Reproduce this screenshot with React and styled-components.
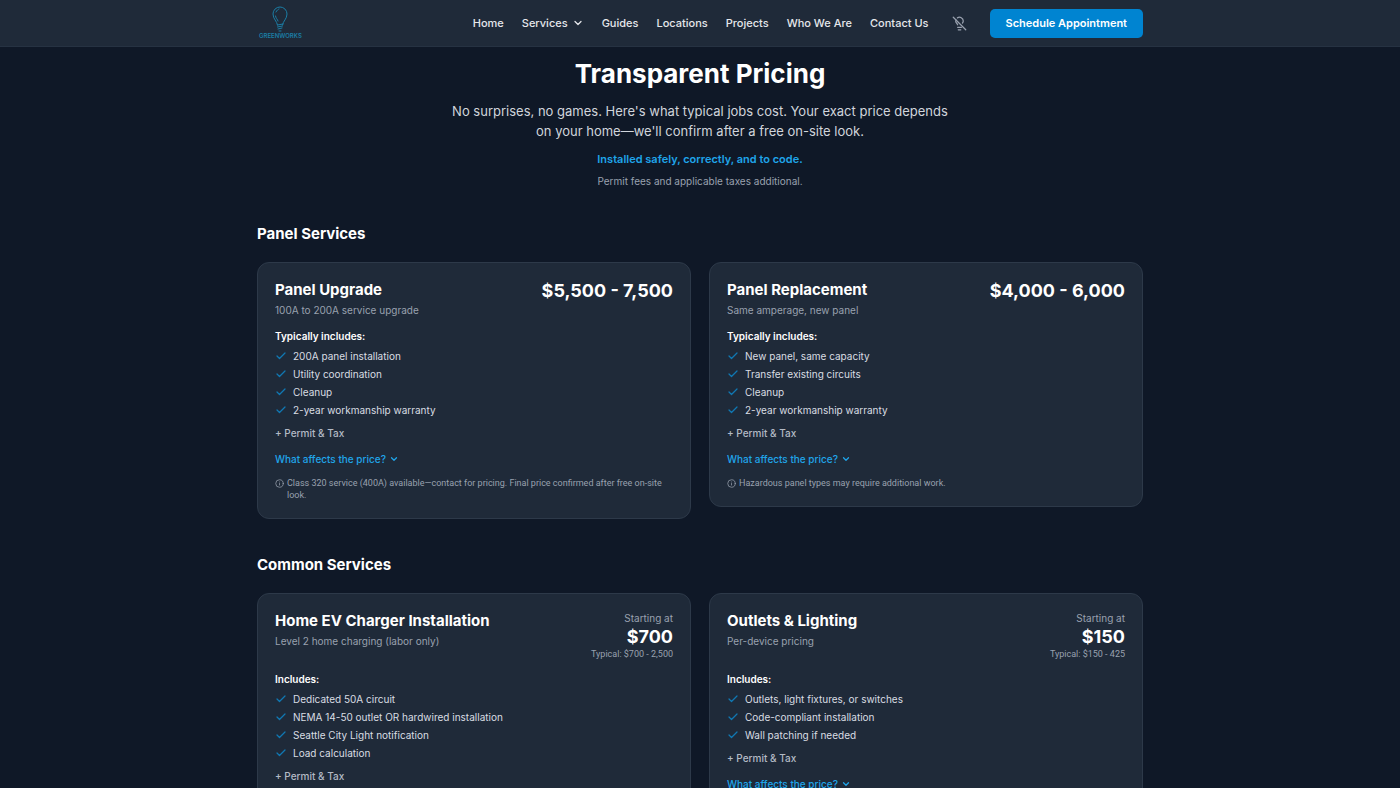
import { Check, ChevronDown, Info, LightbulbOff } from 'lucide-react'
import styled, { createGlobalStyle } from 'styled-components'

const GlobalStyle = createGlobalStyle`
  *, *::before, *::after {
    box-sizing: border-box;
  }
  body {
    margin: 0;
    background: #0f1827;
    color: #ffffff;
    font-family: Inter, 'Liberation Sans', sans-serif;
    font-size: 11px;
    line-height: 16px;
  }
  h1, h2, h3, p, ul {
    margin: 0;
    padding: 0;
  }
  svg {
    flex-shrink: 0;
  }
`

const Page = styled.div`
  height: 100vh;
  overflow: hidden;
`

const Header = styled.header`
  background: #1f2a39;
  border-bottom: 1px solid #263242;
`

const Container = styled.div`
  max-width: 918px;
  margin: 0 auto;
  padding: 0 16px;
`

const HeaderInner = styled(Container)`
  display: flex;
  align-items: center;
  justify-content: space-between;
  height: 46px;
`

const Logo = styled.a`
  display: flex;
  flex-direction: column;
  align-items: center;
  padding-left: 2px;
  color: #1b7ea6;
  font-size: 6px;
  font-weight: 600;
  line-height: 8px;
  text-decoration: none;
`

const HeaderRight = styled.div`
  display: flex;
  align-items: center;
  gap: 23px;
`

const Nav = styled.nav`
  display: flex;
  align-items: center;
  gap: 18px;
`

const NavLink = styled.a`
  display: flex;
  align-items: center;
  gap: 4px;
  color: #e5e7eb;
  font-size: 11px;
  font-weight: 500;
  text-decoration: none;
`

const IconButton = styled.button`
  display: flex;
  padding: 0;
  border: 0;
  background: none;
  color: #99a1af;
`

const CtaButton = styled.button`
  height: 29px;
  padding: 0 16px;
  border: 0;
  border-radius: 5px;
  background: #0084d1;
  color: #ffffff;
  font: inherit;
  font-size: 11px;
  font-weight: 600;
`

const Hero = styled.section`
  display: flex;
  flex-direction: column;
  align-items: center;
  padding: 11px 0 33px;
  text-align: center;
`

const Title = styled.h1`
  font-size: 26px;
  font-weight: 700;
  line-height: 32px;
`

const Lead = styled.p`
  max-width: 500px;
  margin-top: 11px;
  color: #d1d5dc;
  font-size: 13px;
  line-height: 20px;
`

const Tagline = styled.p`
  margin-top: 9px;
  color: #1fa5ea;
  font-size: 11px;
  font-weight: 600;
  line-height: 18px;
`

const HeroNote = styled.p`
  margin-top: 5px;
  color: #99a1af;
  font-size: 10px;
`

const Section = styled.section`
  margin-bottom: 34px;
`

const SectionTitle = styled.h2`
  margin-bottom: 16px;
  font-size: 15px;
  font-weight: 700;
  line-height: 24px;
`

const Grid = styled.div`
  display: grid;
  grid-template-columns: 1fr 1fr;
  align-items: start;
  gap: 18px;
`

const Card = styled.article`
  padding: 17px;
  border: 1px solid #2d3949;
  border-radius: 12px;
  background: #1f2a39;
`

const CardHeader = styled.div`
  display: flex;
  justify-content: space-between;
  margin-bottom: 11px;
`

const CardTitle = styled.h3`
  font-size: 15px;
  font-weight: 700;
  line-height: 20px;
`

const CardSubtitle = styled.p`
  margin-top: 3px;
  color: #99a1af;
  font-size: 10px;
  line-height: 14px;
`

const PriceBlock = styled.div`
  color: #99a1af;
  font-size: 10px;
  line-height: 15px;
  text-align: right;
`

const Price = styled.p`
  color: #ffffff;
  font-size: 18px;
  font-weight: 700;
  line-height: 22px;
`

const Typical = styled.p`
  font-family: Roboto, 'Liberation Sans', sans-serif;
  font-size: 9px;
  line-height: 12px;
`

const ListLabel = styled.p`
  font-size: 10px;
  font-weight: 600;
`

const List = styled.ul`
  display: grid;
  gap: 2px;
  margin-top: 4px;
  list-style: none;
`

const ListItem = styled.li`
  display: flex;
  align-items: center;
  gap: 6px;
  color: #d9dde3;
  font-size: 10px;

  svg {
    color: #1078b3;
  }
`

const Permit = styled.p`
  margin-top: 7px;
  color: #b3bac5;
  font-size: 10px;
  font-weight: 500;
`

const DetailsButton = styled.button`
  display: flex;
  align-items: center;
  gap: 3px;
  margin-top: 10px;
  padding: 0;
  border: 0;
  background: none;
  color: #1fa5ea;
  font: inherit;
  font-size: 10px;
  font-weight: 500;
`

const Footnote = styled.p`
  display: flex;
  gap: 3px;
  margin-top: 10px;
  color: #99a1af;
  font-family: Roboto, 'Liberation Sans', sans-serif;
  font-size: 9px;
  line-height: 12px;

  svg {
    margin-top: 2px;
  }
`

const navLinks = [
  'Home',
  'Services',
  'Guides',
  'Locations',
  'Projects',
  'Who We Are',
  'Contact Us',
]

const sections = [
  {
    title: 'Panel Services',
    cards: [
      {
        title: 'Panel Upgrade',
        subtitle: '100A to 200A service upgrade',
        price: '$5,500 - 7,500',
        label: 'Typically includes:',
        items: [
          '200A panel installation',
          'Utility coordination',
          'Cleanup',
          '2-year workmanship warranty',
        ],
        note: 'Class 320 service (400A) available—contact for pricing. Final price confirmed after free on-site look.',
      },
      {
        title: 'Panel Replacement',
        subtitle: 'Same amperage, new panel',
        price: '$4,000 - 6,000',
        label: 'Typically includes:',
        items: [
          'New panel, same capacity',
          'Transfer existing circuits',
          'Cleanup',
          '2-year workmanship warranty',
        ],
        note: 'Hazardous panel types may require additional work.',
      },
    ],
  },
  {
    title: 'Common Services',
    cards: [
      {
        title: 'Home EV Charger Installation',
        subtitle: 'Level 2 home charging (labor only)',
        price: '$700',
        typical: 'Typical: $700 - 2,500',
        label: 'Includes:',
        items: [
          'Dedicated 50A circuit',
          'NEMA 14-50 outlet OR hardwired installation',
          'Seattle City Light notification',
          'Load calculation',
        ],
      },
      {
        title: 'Outlets & Lighting',
        subtitle: 'Per-device pricing',
        price: '$150',
        typical: 'Typical: $150 - 425',
        label: 'Includes:',
        items: [
          'Outlets, light fixtures, or switches',
          'Code-compliant installation',
          'Wall patching if needed',
        ],
      },
    ],
  },
]

const BulbLogo = () => (
  <svg
    width='18'
    height='26'
    viewBox='0 0 18 26'
    fill='none'
    stroke='currentColor'
    strokeWidth='1'
    strokeLinecap='round'
    aria-hidden='true'
  >
    <path d='M6.5 19C6 15 2 13 2 8a7 7 0 0 1 14 0c0 5-4 7-4.500 11' />
    <path d='M4.500 10c0 2 2 3 2.500 5M5 6c1-2 2-2.500 3-3' />
    <path d='M6.500 19l5.500-1M6.500 21l5-1M7 23l4-1M8 25h2' />
  </svg>
)

const PricingCard = ({ card }) => (
  <Card>
    <CardHeader>
      <div>
        <CardTitle>{card.title}</CardTitle>
        <CardSubtitle>{card.subtitle}</CardSubtitle>
      </div>
      <PriceBlock>
        {card.typical && <p>Starting at</p>}
        <Price>{card.price}</Price>
        {card.typical && <Typical>{card.typical}</Typical>}
      </PriceBlock>
    </CardHeader>
    <ListLabel>{card.label}</ListLabel>
    <List>
      {card.items.map((item) => (
        <ListItem key={item}>
          <Check size={12} strokeWidth={2.5} />
          {item}
        </ListItem>
      ))}
    </List>
    <Permit>+ Permit &amp; Tax</Permit>
    <DetailsButton type='button'>
      What affects the price?
      <ChevronDown size={10} strokeWidth={3} />
    </DetailsButton>
    {card.note && (
      <Footnote>
        <Info size={9} />
        <span>{card.note}</span>
      </Footnote>
    )}
  </Card>
)

const App = () => (
  <Page>
    <GlobalStyle />
    <Header>
      <HeaderInner>
        <Logo href='#'>
          <BulbLogo />
          GREENWORKS
        </Logo>
        <HeaderRight>
          <Nav>
            {navLinks.map((link) => (
              <NavLink key={link} href='#'>
                {link}
                {link === 'Services' && (
                  <ChevronDown size={12} strokeWidth={2.5} />
                )}
              </NavLink>
            ))}
          </Nav>
          <IconButton type='button' aria-label='Toggle lights'>
            <LightbulbOff size={15} />
          </IconButton>
          <CtaButton type='button'>Schedule Appointment</CtaButton>
        </HeaderRight>
      </HeaderInner>
    </Header>
    <Container as='main'>
      <Hero>
        <Title>Transparent Pricing</Title>
        <Lead>
          No surprises, no games. Here's what typical jobs cost. Your exact
          price depends on your home—we'll confirm after a free on-site look.
        </Lead>
        <Tagline>Installed safely, correctly, and to code.</Tagline>
        <HeroNote>Permit fees and applicable taxes additional.</HeroNote>
      </Hero>
      {sections.map((section) => (
        <Section key={section.title}>
          <SectionTitle>{section.title}</SectionTitle>
          <Grid>
            {section.cards.map((card) => (
              <PricingCard key={card.title} card={card} />
            ))}
          </Grid>
        </Section>
      ))}
    </Container>
  </Page>
)

export default App
